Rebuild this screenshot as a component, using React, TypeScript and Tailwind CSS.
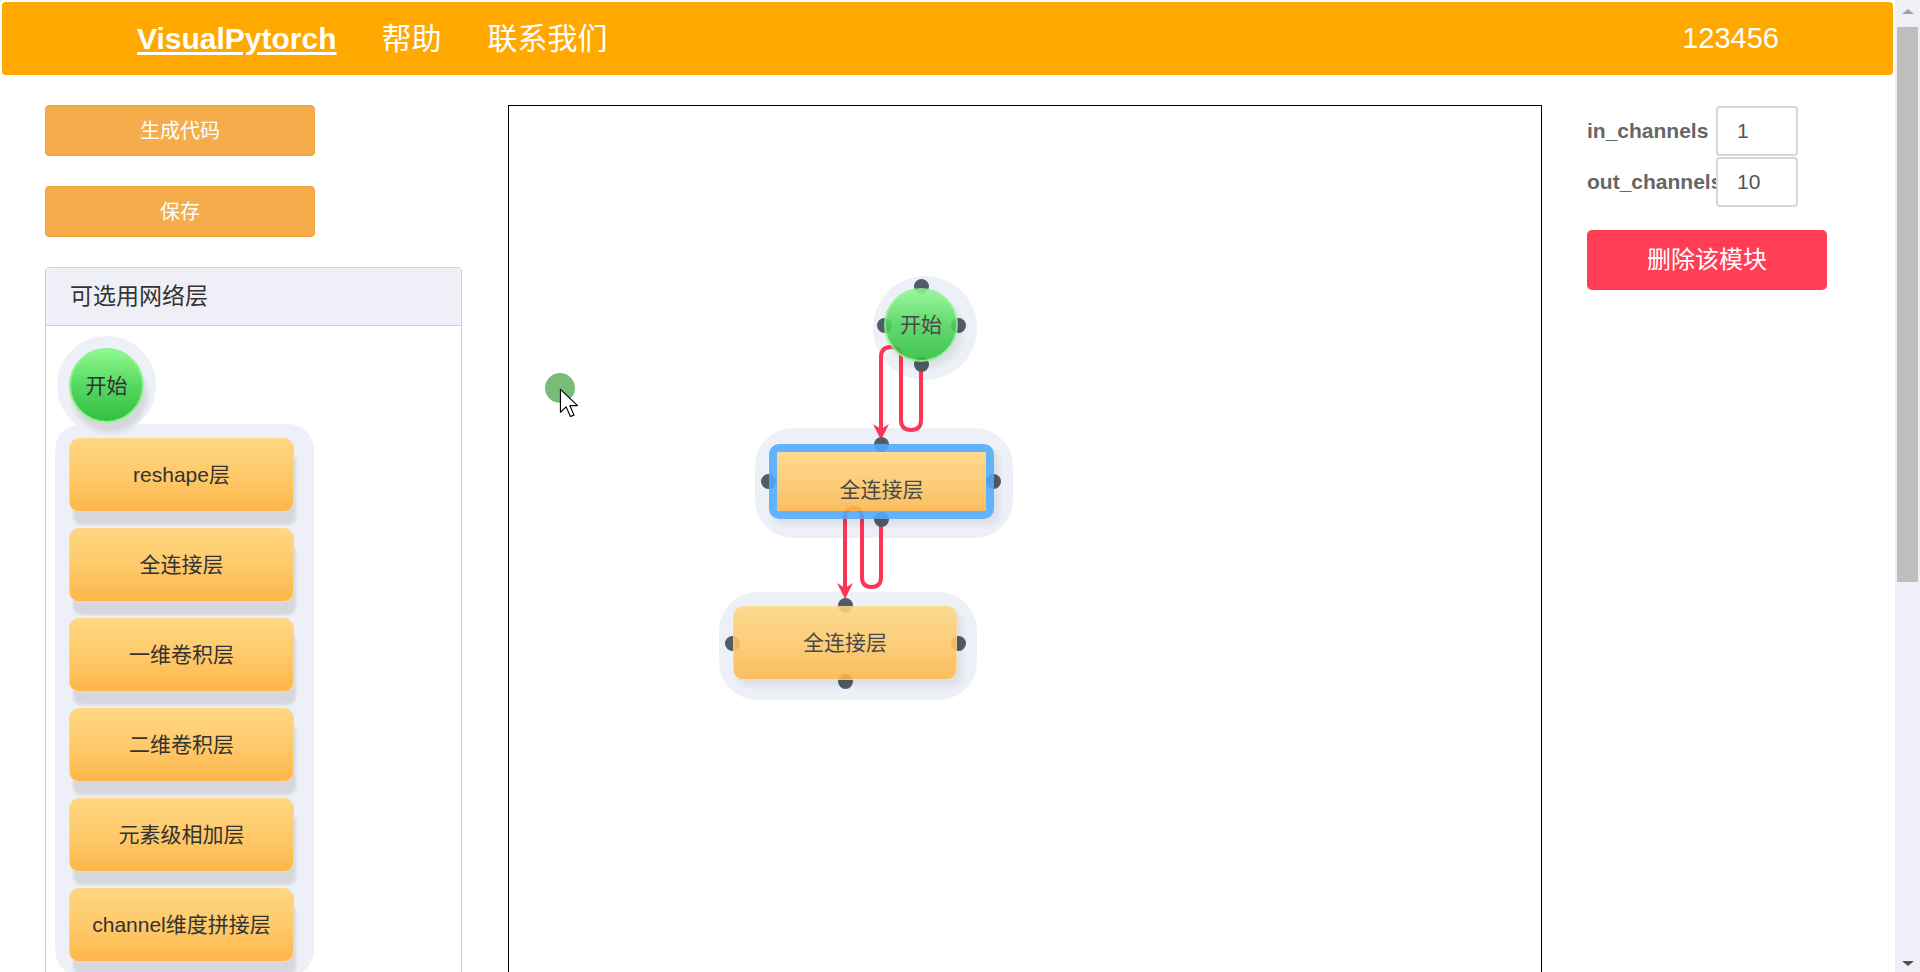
import React from 'react';

const layers = ['reshape层', '全连接层', '一维卷积层', '二维卷积层', '元素级相加层', 'channel维度拼接层'];

// endpoint dots on the canvas, centre coordinates
const dots = [
  [412, 180], [375, 219], [449, 219], [412, 258],
  [372, 338], [259, 375], [484, 375], [372, 413],
  [336, 499], [223, 537], [449, 537], [336, 575],
];

const halos = [
  { left: 364, top: 170, width: 104, height: 104, radius: 52 },
  { left: 246, top: 322, width: 258, height: 110, radius: 38 },
  { left: 210, top: 486, width: 258, height: 108, radius: 38 },
];

function LayerBox({ label }: { label: string }) {
  return (
    <div className="flex h-[74px] w-[225px] items-center justify-center rounded-[10px] border border-[#fed88a] bg-[linear-gradient(to_bottom,#ffd781,#fec868_55%,#fdb64a)] text-[21px] text-[#333] shadow-[3px_14px_3px_-1px_rgba(0,0,0,0.1)]">
      {label}
    </div>
  );
}

function StartCircle() {
  return (
    <div className="flex h-[75px] w-[75px] items-center justify-center rounded-full border-2 border-[#8ef28e] bg-[linear-gradient(to_bottom,#8ff98f,#55d862_50%,#32c042)] text-[21px] text-[#333] shadow-[3px_10px_5px_rgba(0,0,0,0.1)]">
      开始
    </div>
  );
}

function Canvas() {
  return (
    <div className="relative ml-[46px] h-[880px] w-[1034px] shrink-0 border border-black bg-white">
      {halos.map((h, i) => (
        <div
          key={i}
          className="absolute bg-[#eef0f7]"
          style={{ left: h.left, top: h.top, width: h.width, height: h.height, borderRadius: h.radius }}
        />
      ))}

      <svg className="pointer-events-none absolute left-0 top-0" width="1032" height="878">
        <path
          d="M412 258 V314 Q412 324 402 324 Q392 324 392 314 V251 Q392 241 382 241 Q372 241 372 251 V324"
          fill="none"
          stroke="#fd3456"
          strokeWidth="4"
        />
        <polygon points="372,334 364,318 372,323 380,318" fill="#fd3456" />
        <path
          d="M372 413 V471 Q372 481 362.5 481 Q353 481 353 471 V412 Q353 402 344.5 402 Q336 402 336 412 V482"
          fill="none"
          stroke="#fd3456"
          strokeWidth="4"
        />
        <polygon points="336,493 328,477 336,482 344,477" fill="#fd3456" />
      </svg>

      {dots.map(([x, y], i) => (
        <div
          key={i}
          className="absolute h-[15px] w-[15px] rounded-full bg-[#525c69]"
          style={{ left: x - 7.5, top: y - 7.5 }}
        />
      ))}

      {/* start node */}
      <div className="absolute left-[375px] top-[182px] flex h-[74px] w-[74px] items-center justify-center rounded-full border-2 border-[#8ef28e] bg-[linear-gradient(to_bottom,#8ff98f,#4fd65d_50%,#2fbf3f)] text-[21px] text-[#333] opacity-[0.88] shadow-[4px_6px_6px_rgba(0,0,0,0.08)]">
        开始
      </div>

      {/* selected node */}
      <div className="absolute left-[260px] top-[338px] h-[75px] w-[225px] rounded-[10px] border-[8px] border-[#4eabfc] opacity-[0.88] shadow-[5px_6px_6px_rgba(0,0,0,0.08)]">
        <div className="flex h-full w-full items-center justify-center rounded-[2px] bg-[linear-gradient(to_bottom,#ffd781,#fec868_55%,#fdb64a)] pt-[16px] text-[21px] text-[#333]">
          全连接层
        </div>
      </div>

      {/* plain node */}
      <div className="absolute left-[224px] top-[500px] flex h-[74px] w-[224px] items-center justify-center rounded-[10px] border border-[#fed88a] bg-[linear-gradient(to_bottom,#ffd781,#fec868_55%,#fdb64a)] text-[21px] text-[#333] opacity-[0.88] shadow-[5px_6px_6px_rgba(0,0,0,0.08)]">
        全连接层
      </div>

      {/* pointer */}
      <div className="absolute left-[36px] top-[267px] h-[30px] w-[30px] rounded-full bg-[#79bc79]" />
      <svg className="absolute left-[50px] top-[282px]" width="20" height="30" viewBox="0 0 14 21">
        <path d="M1 1 L1 17 L5 13.2 L8 20 L10.5 19 L7.6 12.3 L13 12.3 Z" fill="#fff" stroke="#000" strokeWidth="0.8" strokeLinejoin="round" />
      </svg>
    </div>
  );
}

function Sidebar() {
  return (
    <aside className="w-[417px] shrink-0">
      <button className="block h-[51px] w-[270px] rounded-[4px] border border-[#efa23a] bg-[#f5ad4b] text-[20px] text-white">
        生成代码
      </button>
      <button className="mt-[30px] block h-[51px] w-[270px] rounded-[4px] border border-[#efa23a] bg-[#f5ad4b] text-[20px] text-white">
        保存
      </button>

      <div className="mt-[30px] h-[800px] rounded-t-[4px] border border-[#cfcfd6]">
        <div className="flex h-[58px] items-center border-b border-[#cfcfd6] bg-[#eeeff7] pl-[24px] text-[23px] text-[#333]">
          可选用网络层
        </div>
        <div className="pl-[9px] pt-[10px]">
          <div className="relative z-10 ml-[2px] w-fit rounded-full bg-[#eef0f7] p-[12px]">
            <StartCircle />
          </div>
          <div className="-mt-[11px] flex w-fit flex-col gap-[16px] rounded-[26px] bg-[#eef0f7] pb-[14px] pl-[14px] pr-[20px] pt-[14px]">
            {layers.map((l) => (
              <LayerBox key={l} label={l} />
            ))}
          </div>
        </div>
      </div>
    </aside>
  );
}

function Params() {
  return (
    <div className="ml-[45px] w-[260px] shrink-0">
      <div className="flex h-[51px] items-center">
        <span className="w-[129px] shrink-0 whitespace-nowrap text-[21px] font-bold text-[#666]">in_channels</span>
        <input
          className="relative h-[50px] w-[82px] rounded-[4px] border-2 border-[#d6d6d9] bg-white pl-[19px] text-[21px] text-[#555] outline-none"
          defaultValue="1"
        />
      </div>
      <div className="flex h-[51px] items-center">
        <span className="w-[129px] shrink-0 whitespace-nowrap text-[21px] font-bold text-[#666]">out_channels</span>
        <input
          className="relative h-[50px] w-[82px] rounded-[4px] border-2 border-[#d6d6d9] bg-white pl-[19px] text-[21px] text-[#555] outline-none"
          defaultValue="10"
        />
      </div>
      <button className="mt-[23px] h-[60px] w-[240px] rounded-[5px] bg-[#ff3e55] text-[24px] text-white">
        删除该模块
      </button>
    </div>
  );
}

export default function App() {
  return (
    <div className="flex h-[972px] w-[1920px] overflow-hidden bg-white font-['Liberation_Sans','Noto_Sans_CJK_SC',sans-serif]">
      <div className="w-[1895px] shrink-0">
        <header className="mx-[2px] mt-[2px] flex h-[73px] items-center rounded-[4px] bg-[#ffa800] text-white">
          <a className="ml-[135px] text-[30px] font-bold underline decoration-[2.5px] underline-offset-[3px]">
            VisualPytorch
          </a>
          <span className="ml-[45px] text-[30px]">帮助</span>
          <span className="ml-[46px] text-[30px]">联系我们</span>
          <span className="ml-auto mr-[114px] text-[29px]">123456</span>
        </header>

        <div className="mt-[30px] flex items-start pl-[45px]">
          <Sidebar />
          <Canvas />
          <Params />
        </div>
      </div>

      {/* scrollbar */}
      <div className="flex h-full w-[25px] shrink-0 flex-col items-center bg-[#efeff7]">
        <div className="mt-[9px] h-0 w-0 border-x-[6px] border-b-[5px] border-x-transparent border-b-[#a3a3a3]" />
        <div className="mt-[13px] h-[555px] w-[21px] bg-[#bebebe]" />
        <div className="mb-[6px] mt-auto h-0 w-0 border-x-[6px] border-t-[5px] border-x-transparent border-t-[#505050]" />
      </div>
    </div>
  );
}
